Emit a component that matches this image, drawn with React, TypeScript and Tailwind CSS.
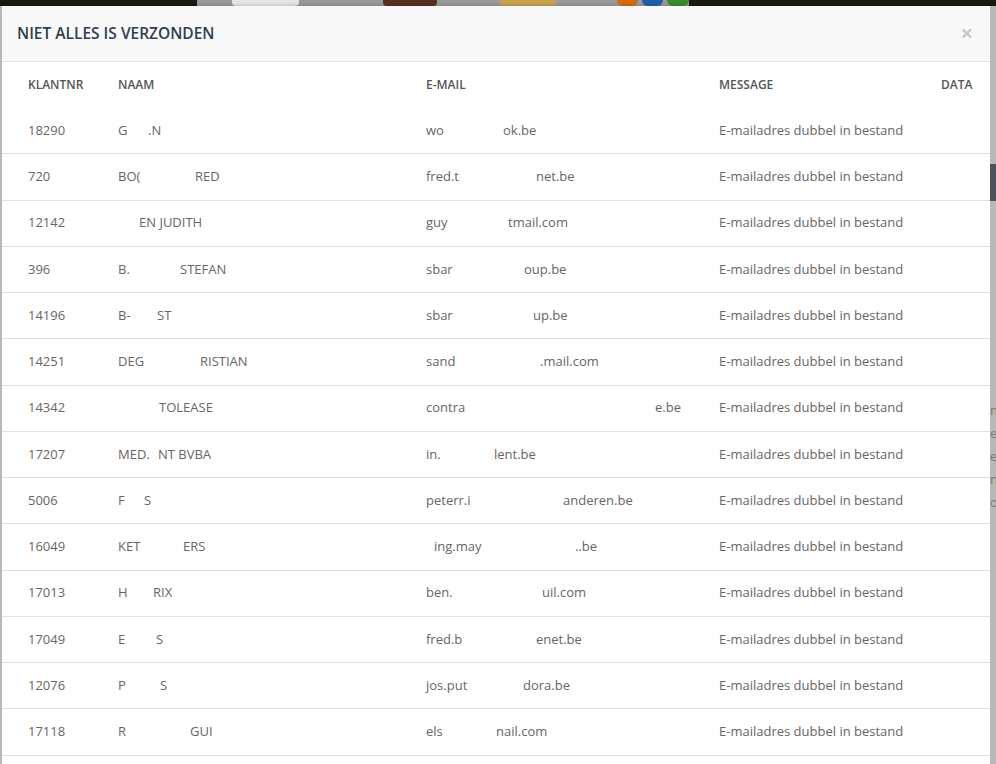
import React from 'react';

// Visible fragments of the (partly blanked-out) cells: [text, width class of the slot it sits in]
type Frag = [string, string];

interface Row {
  nr: string;
  naam: Frag[];
  email: Frag[];
}

const ROWS: Row[] = [
  { nr: '18290', naam: [['G', 'w-[30px]'], ['.N', '']], email: [['wo', 'w-[77px]'], ['ok.be', '']] },
  { nr: '720', naam: [['BO(', 'w-[77px]'], ['RED', '']], email: [['fred.t', 'w-[110px]'], ['net.be', '']] },
  { nr: '12142', naam: [['', 'w-[21px]'], ['EN JUDITH', '']], email: [['guy', 'w-[82px]'], ['tmail.com', '']] },
  { nr: '396', naam: [['B.', 'w-[62px]'], ['STEFAN', '']], email: [['sbar', 'w-[98px]'], ['oup.be', '']] },
  { nr: '14196', naam: [['B-', 'w-[39px]'], ['ST', '']], email: [['sbar', 'w-[107px]'], ['up.be', '']] },
  { nr: '14251', naam: [['DEG', 'w-[82px]'], ['RISTIAN', '']], email: [['sand', 'w-[114px]'], ['.mail.com', '']] },
  { nr: '14342', naam: [['', 'w-[41px]'], ['TOLEASE', '']], email: [['contra', 'w-[229px]'], ['e.be', '']] },
  { nr: '17207', naam: [['MED.', 'w-[40px]'], ['NT BVBA', '']], email: [['in.', 'w-[68px]'], ['lent.be', '']] },
  { nr: '5006', naam: [['F', 'w-[26px]'], ['S', '']], email: [['peterr.i', 'w-[137px]'], ['anderen.be', '']] },
  { nr: '16049', naam: [['KET', 'w-[65px]'], ['ERS', '']], email: [['', 'w-[8px]'], ['ing.may', 'w-[141px]'], ['..be', '']] },
  { nr: '17013', naam: [['H', 'w-[35px]'], ['RIX', '']], email: [['ben.', 'w-[116px]'], ['uil.com', '']] },
  { nr: '17049', naam: [['E', 'w-[38px]'], ['S', '']], email: [['fred.b', 'w-[110px]'], ['enet.be', '']] },
  { nr: '12076', naam: [['P', 'w-[42px]'], ['S', '']], email: [['jos.put', 'w-[97px]'], ['dora.be', '']] },
  { nr: '17118', naam: [['R', 'w-[72px]'], ['GUI', '']], email: [['els', 'w-[70px]'], ['nail.com', '']] },
  { nr: '', naam: [], email: [] },
];

const COLS = 'grid grid-cols-[116px_308px_293px_222px_1fr]';

function Frags({ parts }: { parts: Frag[] }) {
  return (
    <span className="whitespace-nowrap">
      {parts.map(([t, w], i) => (
        <span key={i} className={w ? `inline-block ${w}` : 'inline-block'}>
          {t}
        </span>
      ))}
    </span>
  );
}

function TopStrip() {
  return (
    <div className="h-[6px] flex bg-[#1c1915] shrink-0">
      <div className="w-[197px]" />
      <div className="w-[492px] flex bg-[#9a9a9a]">
        <div className="w-[35px]" />
        <div className="w-[67px] rounded-b bg-[#e6e6e6]" />
        <div className="w-[84px]" />
        <div className="w-[54px] rounded-b bg-[#5a2e22]" />
        <div className="w-[62px]" />
        <div className="w-[58px] rounded-b-lg bg-[#c9a24f]" />
        <div className="w-[60px]" />
        <div className="w-[21px] rounded-b-full bg-[#d66a12]" />
        <div className="w-[4px]" />
        <div className="w-[21px] rounded-b-full bg-[#1f5fa8]" />
        <div className="w-[4px]" />
        <div className="w-[22px] rounded-b-full bg-[#3a8a2e]" />
      </div>
    </div>
  );
}

export default function App() {
  return (
    <div className="h-[764px] w-[996px] overflow-hidden bg-[#b4b4b4] flex flex-col font-['Open_Sans',sans-serif]">
      <TopStrip />
      <div className="flex flex-1 min-h-0">
        <div className="w-[2px] bg-[#bcbcbc] shrink-0" />

        {/* Modal */}
        <div className="w-[988px] shrink-0 bg-white shadow-[2px_0_4px_rgba(0,0,0,0.25)] overflow-hidden">
          <div className="h-[56px] flex items-center justify-between bg-[#f8f8f8] border-b border-[#e5e5e5] pl-[15px] pr-[17px]">
            <h1 className="text-[15.5px] font-semibold text-[#2f3e4e]">NIET ALLES IS VERZONDEN</h1>
            <span className="text-[22px] font-bold leading-none text-[#c8c8c8] -mt-[4px]">×</span>
          </div>

          <div>
            <div className={`${COLS} h-[46px] items-center text-[12px] font-semibold text-[#555]`}>
              <div className="pl-[26px]">KLANTNR</div>
              <div>NAAM</div>
              <div>E-MAIL</div>
              <div>MESSAGE</div>
              <div>DATA</div>
            </div>
            {ROWS.map((r, i) => (
              <div
                key={i}
                className={`${COLS} h-[46.25px] items-center border-b border-[#dedede] text-[13px] text-[#666]`}
              >
                <div className="pl-[26px]">{r.nr}</div>
                <div><Frags parts={r.naam} /></div>
                <div><Frags parts={r.email} /></div>
                <div>{r.nr ? 'E-mailadres dubbel in bestand' : ''}</div>
                <div />
              </div>
            ))}
          </div>
        </div>

        {/* Dimmed page behind the overlay */}
        <div className="flex-1 flex flex-col bg-[#b8b8b8] text-[13px] text-[#7a7a7a] leading-[23px] overflow-hidden">
          <div className="h-[158px]" />
          <div className="h-[37px] bg-[#4b5259]" />
          <div className="h-[198px]" />
          <div>n</div>
          <div>e</div>
          <div>e</div>
          <div>n</div>
          <div>o</div>
        </div>
      </div>
    </div>
  );
}
